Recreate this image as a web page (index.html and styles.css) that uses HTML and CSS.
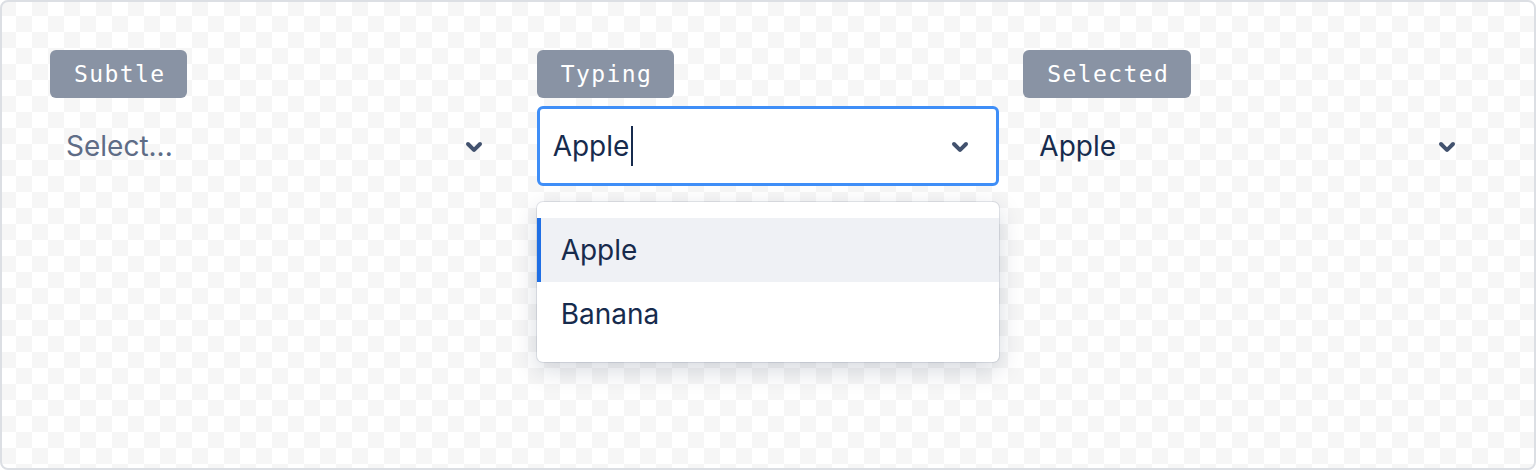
FILE: index.html
```html
<!DOCTYPE html>
<html lang="en">
<head>
<meta charset="utf-8">
<title>Select states</title>
<link rel="stylesheet" href="styles.css">
</head>
<body>
<div class="frame">
  <div class="grid">
    <div class="col">
      <span class="badge">Subtle</span>
      <div class="control">
        <span class="placeholder">Select...</span>
        <svg class="chev" viewBox="0 0 24 24"><path d="M8.292 10.293a1.009 1.009 0 0 0 0 1.419l2.939 2.965c.218.215.5.322.779.322s.556-.107.769-.322l2.93-2.955a1.01 1.01 0 0 0 0-1.419.987.987 0 0 0-1.406 0l-2.298 2.317-2.307-2.327a.99.99 0 0 0-1.406 0z"/></svg>
      </div>
    </div>
    <div class="col">
      <span class="badge">Typing</span>
      <div class="control focused">
        <span class="value">Apple<span class="caret"></span></span>
        <svg class="chev" viewBox="0 0 24 24"><path d="M8.292 10.293a1.009 1.009 0 0 0 0 1.419l2.939 2.965c.218.215.5.322.779.322s.556-.107.769-.322l2.93-2.955a1.01 1.01 0 0 0 0-1.419.987.987 0 0 0-1.406 0l-2.298 2.317-2.307-2.327a.99.99 0 0 0-1.406 0z"/></svg>
      </div>
      <div class="menu">
        <div class="option active">Apple</div>
        <div class="option">Banana</div>
      </div>
    </div>
    <div class="col">
      <span class="badge">Selected</span>
      <div class="control">
        <span class="value">Apple</span>
        <svg class="chev" viewBox="0 0 24 24"><path d="M8.292 10.293a1.009 1.009 0 0 0 0 1.419l2.939 2.965c.218.215.5.322.779.322s.556-.107.769-.322l2.93-2.955a1.01 1.01 0 0 0 0-1.419.987.987 0 0 0-1.406 0l-2.298 2.317-2.307-2.327a.99.99 0 0 0-1.406 0z"/></svg>
      </div>
    </div>
  </div>
</div>
</body>
</html>
```

FILE: styles.css
```css
* { box-sizing: border-box; }
html, body { margin: 0; padding: 0; background: #fff; }
body { font-family: Inter, "Liberation Sans", sans-serif; }

.frame {
  width: 1536px;
  height: 470px;
  border: 2px solid #dcdfe4;
  border-radius: 8px;
  background-color: #fff;
  background-image: conic-gradient(#fff 25%, #f6f6f6 0 50%, #fff 0 75%, #f6f6f6 0);
  background-size: 32px 32px;
  background-origin: border-box;
  background-clip: border-box;
  padding: 48px 48px;
}

.grid {
  display: grid;
  grid-template-columns: repeat(3, 1fr);
  column-gap: 24px;
}

.col {
  display: flex;
  flex-direction: column;
  align-items: flex-start;
}

.badge {
  display: inline-block;
  height: 48px;
  line-height: 48px;
  padding: 0 22px 0 24px;
  background: #8993a4;
  color: #fff;
  border-radius: 6px;
  font-family: "DejaVu Sans Mono", "Liberation Mono", monospace;
  font-size: 23px;
  letter-spacing: 1.4px;
}

.control {
  margin-top: 8px;
  width: 100%;
  height: 80px;
  border: 3px solid transparent;
  border-radius: 6px;
  display: flex;
  align-items: center;
  padding: 0 12px 0 13px;
  font-size: 28px;
  color: #172b4d;
}

.control.focused {
  border-color: #3f8ef7;
  background: #fff;
}

.placeholder { color: #5e6c86; flex: 1; }
.value { flex: 1; display: flex; align-items: center; }

.caret {
  display: inline-block;
  width: 2px;
  height: 40px;
  background: #172b4d;
  margin-left: 2px;
}

.chev {
  width: 48px;
  height: 48px;
  fill: #42526e;
  flex: none;
}

.menu {
  margin-top: 16px;
  width: 100%;
  background: #fff;
  border-radius: 6px;
  padding: 16px 0;
  box-shadow: 0 0 0 1px rgba(9, 30, 66, 0.1), 0 8px 24px rgba(9, 30, 66, 0.17);
}

.option {
  height: 64px;
  line-height: 64px;
  padding-left: 24px;
  font-size: 28px;
  color: #172b4d;
}

.option.active {
  background: #eff1f5;
  box-shadow: inset 4px 0 0 #1f6fe5;
}
```
